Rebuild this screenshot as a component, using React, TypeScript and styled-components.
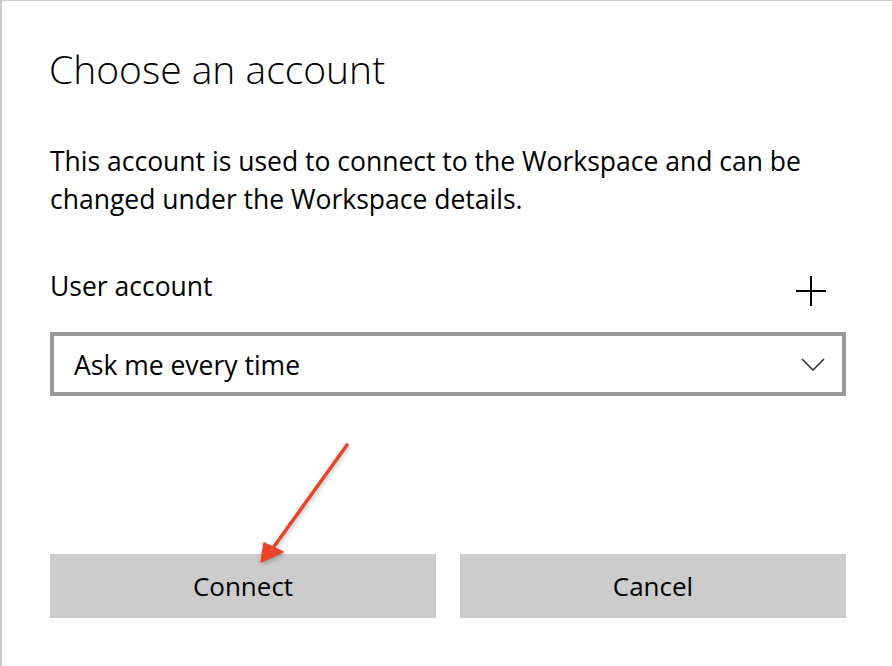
import React from "react";
import styled, { createGlobalStyle } from "styled-components";

const GlobalStyle = createGlobalStyle`
  html, body {
    margin: 0;
    padding: 0;
    background: #ffffff;
  }
  body {
    font-family: "Open Sans", "Noto Sans", sans-serif;
    color: #000000;
  }
  * { box-sizing: border-box; }
`;

const Dialog = styled.div`
  position: relative;
  width: 892px;
  height: 666px;
  border-top: 1px solid #cbcbcb;
  border-left: 2px solid #cbcbcb;
  padding: 0 46px 0 48px;
  display: flex;
  flex-direction: column;
  background: #ffffff;
  overflow: hidden;
`;

const Title = styled.h1`
  margin: 42px 0 0 -1px;
  font-size: 39px;
  line-height: 52px;
  font-weight: 350;
  color: #000;
`;

const Description = styled.p`
  margin: 47px 0 0 0;
  font-size: 26.5px;
  line-height: 38px;
  font-weight: 400;
  color: #000;
`;

const LabelRow = styled.div`
  margin-top: 51px;
  display: flex;
  justify-content: space-between;
  align-items: flex-start;
`;

const Label = styled.span`
  font-size: 26.5px;
  line-height: 35px;
`;

const AddButton = styled.button`
  margin: 7px 20px 0 0;
  padding: 0;
  width: 30px;
  height: 30px;
  border: none;
  background: transparent;
  display: flex;
  cursor: pointer;
`;

const Select = styled.div`
  margin-top: 26px;
  height: 64px;
  border: 4px solid #999999;
  display: flex;
  align-items: center;
  justify-content: space-between;
  padding: 0 17px 0 20px;
  font-size: 26.5px;
  line-height: 35px;
`;

const SelectText = styled.span`
  margin-top: 2px;
`;

const Buttons = styled.div`
  margin-top: 158px;
  display: grid;
  grid-template-columns: 1fr 1fr;
  gap: 24px;
`;

const Button = styled.button`
  height: 64px;
  border: none;
  background: #cccccc;
  font-family: "Open Sans", "Noto Sans", sans-serif;
  font-size: 26px;
  color: #000;
  padding: 0;
  cursor: pointer;
`;

const ArrowLayer = styled.svg`
  position: absolute;
  left: 240px;
  top: 430px;
  overflow: visible;
  pointer-events: none;
  filter: drop-shadow(1px 2px 2px rgba(0, 0, 0, 0.25));
`;

export default function App() {
  return (
    <>
      <GlobalStyle />
      <Dialog>
        <Title>Choose an account</Title>
        <Description>
          This account is used to connect to the Workspace and can be changed
          under the Workspace details.
        </Description>
        <LabelRow>
          <Label>User account</Label>
          <AddButton aria-label="Add account">
            <svg width="30" height="30" viewBox="0 0 30 30">
              <path d="M15 0 V30 M0 15 H30" stroke="#000" strokeWidth="2" fill="none" />
            </svg>
          </AddButton>
        </LabelRow>
        <Select>
          <SelectText>Ask me every time</SelectText>
          <svg width="24" height="13" viewBox="0 0 24 13">
            <path d="M1 1 L12 12 L23 1" stroke="#333" strokeWidth="1.6" fill="none" />
          </svg>
        </Select>
        <Buttons>
          <Button>Connect</Button>
          <Button>Cancel</Button>
        </Buttons>
        <ArrowLayer width="120" height="140" viewBox="0 0 120 140">
          <line x1="105" y1="14" x2="31" y2="117" stroke="#e8442a" strokeWidth="3.5" strokeLinecap="round" />
          <polygon points="19,131 22,112 41,121" fill="#e8442a" stroke="#e8442a" strokeWidth="1.5" strokeLinejoin="round" />
        </ArrowLayer>
      </Dialog>
    </>
  );
}
